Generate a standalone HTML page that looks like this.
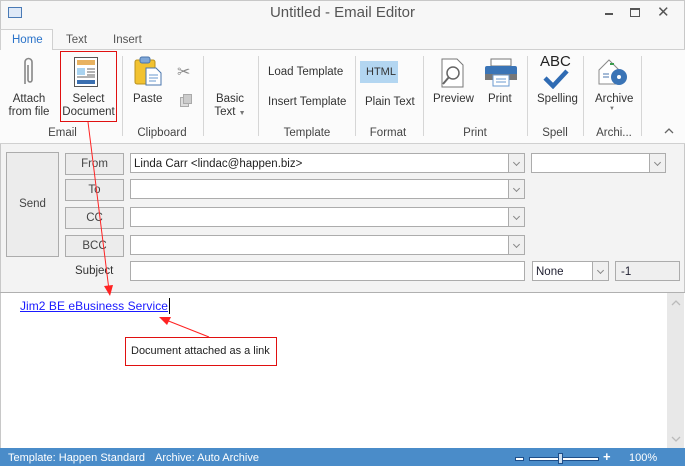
<!DOCTYPE html>
<html><head><meta charset="utf-8"><style>
*{box-sizing:border-box;margin:0;padding:0}
body{width:685px;height:466px;overflow:hidden;background:#fff;font-family:"Liberation Sans",sans-serif;font-size:11px;color:#333;position:relative}
.a{position:absolute}
.t{position:absolute;white-space:nowrap;font-size:11.5px;color:#333}
.c{text-align:center}
.sep{position:absolute;top:56px;width:1px;height:80px;background:#d6d6d6}
.btn{position:absolute;background:#ececec;border:1px solid #acacac;text-align:center;color:#444;font-size:11.5px}
.inp{position:absolute;background:#fff;border:1px solid #acacac}
.dd{position:absolute;top:-1px;right:-1px;width:17px;bottom:-1px;border:1px solid #acacac;background:#f0f0f0}
.dd:after{content:"";position:absolute;left:5px;top:6px;width:4px;height:4px;border-right:1.5px solid #888;border-bottom:1.5px solid #888;transform:rotate(45deg)}
.gl{position:absolute;top:127px;font-size:11.5px;color:#444;text-align:center}
</style></head><body>
<div class="a" style="left:0;top:0;width:685px;height:145px;background:#f7f7f7;border:1px solid #c8c8c8;border-bottom:none"></div>
<div class="a" style="left:8px;top:7px;width:14px;height:11px;border:1px solid #4a7ab5;background:#dfe9f7"></div>
<div class="t" style="left:0;width:685px;top:4px;font-size:15px;color:#555;text-align:center">Untitled - Email Editor</div>
<div class="a" style="left:605px;top:13px;width:8px;height:2px;background:#555"></div>
<div class="a" style="left:630px;top:8px;width:10px;height:9px;border:1.5px solid #555;border-top-width:2px"></div>
<div class="t" style="left:657px;top:3px;font-size:15px;color:#555">✕</div>
<!-- tabs -->
<div class="a" style="left:0;top:49px;width:685px;height:1px;background:#d0d0d0"></div>
<div class="a" style="left:0;top:29px;width:53px;height:21px;background:#fbfbfb;border:1px solid #d0d0d0;border-bottom:none"></div>
<div class="t" style="left:12px;top:34px;color:#2a73c9">Home</div>
<div class="t" style="left:66px;top:34px;color:#555">Text</div>
<div class="t" style="left:113px;top:34px;color:#555">Insert</div>
<div class="a" style="left:0;top:50px;width:685px;height:93px;background:#fbfbfb"></div>
<div class="a" style="left:0;top:143px;width:685px;height:1px;background:#d0d0d0"></div>
<!-- email group -->
<svg class="a" style="left:20px;top:56px" width="16" height="32"><path d="M5 28 V6 a3.5 3.5 0 0 1 7 0 V24 a2 2 0 0 1 -4 0 V9" fill="none" stroke="#888" stroke-width="1.6"/></svg>
<div class="t c" style="left:6px;width:46px;top:93px;line-height:13px">Attach<br>from file</div>
<div class="a" style="left:60px;top:51px;width:57px;height:71px;border:1px solid #e01010"></div>
<svg class="a" style="left:74px;top:57px" width="24" height="30"><rect x="0.5" y="0.5" width="23" height="29" fill="#fff" stroke="#555"/><rect x="3" y="3" width="18" height="5" fill="#e8b260"/><rect x="3" y="11" width="8" height="7" fill="#a9d3f0"/><path d="M13 12h8M13 15h8M13 18h8M3 20h18" stroke="#666"/><rect x="3" y="23" width="18" height="4" fill="#3a6fb0"/></svg>
<div class="t c" style="left:60px;width:57px;top:93px;line-height:13px">Select<br>Document</div>
<div class="gl" style="left:40px;width:45px">Email</div>
<div class="sep" style="left:122px"></div>
<!-- clipboard -->
<svg class="a" style="left:134px;top:56px" width="30" height="30"><rect x="1" y="4" width="20" height="24" rx="2" fill="#f2c230" stroke="#b8901c"/><rect x="6" y="1" width="10" height="6" rx="2" fill="#7fa7d8" stroke="#4a76ad"/><path d="M12 12h10l5 5v12H12z" fill="#fff" stroke="#4a76ad"/><path d="M15 19h9M15 22h9M15 25h7" stroke="#6a98cf"/></svg>
<div class="t" style="left:133px;top:93px">Paste</div>
<div class="t" style="left:177px;top:62px;font-size:16px;color:#888">✂</div>
<div class="a" style="left:180px;top:97px;width:9px;height:10px;border:1px solid #aaa;background:#ddd"></div>
<div class="a" style="left:183px;top:94px;width:9px;height:10px;border:1px solid #aaa;background:#ccc"></div>
<div class="gl" style="left:130px;width:64px">Clipboard</div>
<div class="sep" style="left:203px"></div>
<div class="t c" style="left:210px;width:40px;top:93px;line-height:13px">Basic<br>Text <span style="font-size:7px;color:#777">▼</span></div>
<div class="sep" style="left:258px"></div>
<div class="t" style="left:268px;top:66px">Load Template</div>
<div class="t" style="left:268px;top:96px">Insert Template</div>
<div class="gl" style="left:280px;width:54px">Template</div>
<div class="sep" style="left:355px"></div>
<div class="a" style="left:360px;top:61px;width:38px;height:22px;background:#b3d6f1"></div>
<div class="t" style="left:366px;top:66px;font-size:11px">HTML</div>
<div class="t" style="left:365px;top:96px">Plain Text</div>
<div class="gl" style="left:368px;width:40px">Format</div>
<div class="sep" style="left:423px"></div>
<svg class="a" style="left:441px;top:58px" width="24" height="30"><path d="M1 1h15l6 6v22H1z" fill="#fff" stroke="#777"/><circle cx="12" cy="15" r="6" fill="none" stroke="#666" stroke-width="1.5"/><path d="M8 19L2 26" stroke="#666" stroke-width="2"/></svg>
<div class="t" style="left:433px;top:93px">Preview</div>
<svg class="a" style="left:484px;top:58px" width="34" height="30"><rect x="7" y="1" width="20" height="7" fill="#fff" stroke="#777"/><rect x="1" y="8" width="32" height="12" rx="2" fill="#3a74b6"/><rect x="1" y="16" width="32" height="6" fill="#777"/><rect x="9" y="17" width="16" height="11" fill="#fff" stroke="#6a98cf"/><path d="M12 21h10M12 24h10" stroke="#6a98cf"/></svg>
<div class="t" style="left:488px;top:93px">Print</div>
<div class="gl" style="left:455px;width:40px">Print</div>
<div class="sep" style="left:527px"></div>
<div class="t" style="left:540px;top:53px;font-size:15px;color:#222">ABC</div>
<svg class="a" style="left:543px;top:69px" width="26" height="20"><path d="M2 9l8 8L24 2" fill="none" stroke="#2f6bb3" stroke-width="4.5"/></svg>
<div class="t" style="left:537px;top:93px">Spelling</div>
<div class="gl" style="left:540px;width:30px">Spell</div>
<div class="sep" style="left:583px"></div>
<svg class="a" style="left:597px;top:56px" width="32" height="32"><path d="M2 14L12 4l10 10v14H2z" fill="#fff" stroke="#888"/><path d="M6 18h6M6 21h6" stroke="#4a76ad"/><rect x="13" y="7" width="4" height="2" fill="#3a9c4e"/><circle cx="22" cy="21" r="8" fill="#3a74b6"/><circle cx="22" cy="21" r="2" fill="#fff"/></svg>
<div class="t" style="left:595px;top:93px">Archive</div>
<div class="t" style="left:609px;top:106px;font-size:6px;color:#777">▼</div>
<div class="gl" style="left:594px;width:40px">Archi...</div>
<div class="sep" style="left:641px"></div>
<svg class="a" style="left:664px;top:127px" width="10" height="8"><path d="M1 6l4-4 4 4" fill="none" stroke="#666" stroke-width="1.3"/></svg>
<!-- form -->
<div class="a" style="left:0;top:144px;width:685px;height:149px;background:#f3f3f3;border-left:1px solid #c8c8c8;border-right:1px solid #c8c8c8"></div>
<div class="btn" style="left:6px;top:152px;width:53px;height:105px;line-height:103px">Send</div>
<div class="btn" style="left:65px;top:153px;width:59px;height:22px;line-height:21px">From</div>
<div class="btn" style="left:65px;top:179px;width:59px;height:22px;line-height:21px">To</div>
<div class="btn" style="left:65px;top:207px;width:59px;height:22px;line-height:21px">CC</div>
<div class="btn" style="left:65px;top:235px;width:59px;height:22px;line-height:21px">BCC</div>
<div class="t" style="left:75px;top:265px">Subject</div>
<div class="inp" style="left:130px;top:153px;width:395px;height:20px"><span class="t" style="left:3px;top:4px;color:#222">Linda Carr &lt;lindac@happen.biz&gt;</span><div class="dd"></div></div>
<div class="inp" style="left:130px;top:179px;width:395px;height:20px"><div class="dd"></div></div>
<div class="inp" style="left:130px;top:207px;width:395px;height:20px"><div class="dd"></div></div>
<div class="inp" style="left:130px;top:235px;width:395px;height:20px"><div class="dd"></div></div>
<div class="inp" style="left:130px;top:261px;width:395px;height:20px"></div>
<div class="inp" style="left:531px;top:153px;width:135px;height:20px"><div class="dd"></div></div>
<div class="inp" style="left:532px;top:261px;width:77px;height:20px"><span class="t" style="left:3px;top:4px;color:#223">None</span><div class="dd"></div></div>
<div class="inp" style="left:615px;top:261px;width:65px;height:20px;background:#efefef"><span class="t" style="left:5px;top:4px;color:#223">-1</span></div>
<!-- editor -->
<div class="a" style="left:0;top:292px;width:685px;height:1px;background:#b0b0b0"></div>
<div class="a" style="left:0;top:293px;width:1px;height:156px;background:#c8c8c8"></div>
<div class="a" style="left:667px;top:293px;width:17px;height:156px;background:#e8e8e8"></div>
<svg class="a" style="left:671px;top:299px" width="10" height="8"><path d="M1 6l4-4 4 4" fill="none" stroke="#bbb" stroke-width="1.3"/></svg>
<svg class="a" style="left:671px;top:435px" width="10" height="8"><path d="M1 2l4 4 4-4" fill="none" stroke="#bbb" stroke-width="1.3"/></svg>
<div class="t" style="left:20px;top:299px;font-size:12px;color:#1a1aff;text-decoration:underline;letter-spacing:0.05px">Jim2 BE eBusiness Service</div>
<div class="a" style="left:169px;top:298px;width:1px;height:16px;background:#000"></div>
<div class="a" style="left:125px;top:337px;width:152px;height:29px;border:1px solid #e01010;background:#fff"></div>
<div class="t" style="left:131px;top:345px;color:#222;font-size:11px">Document attached as a link</div>
<svg class="a" style="left:0;top:0" width="685" height="466"><path d="M88 122L109 290" stroke="#f22" stroke-width="1"/><path d="M104 286l6 10l3-11z" fill="#f22"/><path d="M209 337L166 320" stroke="#f22"/><path d="M159 317l12 0l-4 8z" fill="#f22"/></svg>
<!-- status -->
<div class="a" style="left:0;top:448px;width:685px;height:18px;background:#4a8cc9"></div>
<div class="t" style="left:8px;top:452px;color:#fff;font-size:11px">Template: Happen Standard</div>
<div class="t" style="left:155px;top:452px;color:#fff;font-size:11px">Archive: Auto Archive</div>
<div class="a" style="left:516px;top:458px;width:7px;height:2px;background:#fff;outline:1px solid #1e4f8a"></div>
<div class="a" style="left:530px;top:458px;width:68px;height:2px;background:#fff;outline:1px solid #1e4f8a"></div>
<div class="a" style="left:558px;top:453px;width:5px;height:11px;background:#c8dcf0;border:1px solid #1e4f8a"></div>
<div class="t" style="left:603px;top:449px;font-size:13px;color:#fff;font-weight:bold">+</div>
<div class="t" style="left:629px;top:452px;color:#fff;font-size:11px">100%</div>
</body></html>
